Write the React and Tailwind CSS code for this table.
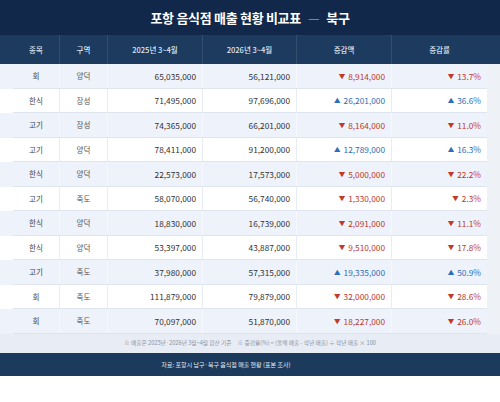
import React from "react";

const rows = [
  ["회", "양덕", "65,035,000", "56,121,000", "8,914,000", "13.7%", false],
  ["한식", "장성", "71,495,000", "97,696,000", "26,201,000", "36.6%", true],
  ["고기", "장성", "74,365,000", "66,201,000", "8,164,000", "11.0%", false],
  ["고기", "양덕", "78,411,000", "91,200,000", "12,789,000", "16.3%", true],
  ["한식", "양덕", "22,573,000", "17,573,000", "5,000,000", "22.2%", false],
  ["고기", "죽도", "58,070,000", "56,740,000", "1,330,000", "2.3%", false],
  ["한식", "양덕", "18,830,000", "16,739,000", "2,091,000", "11.1%", false],
  ["한식", "양덕", "53,397,000", "43,887,000", "9,510,000", "17.8%", false],
  ["고기", "죽도", "37,980,000", "57,315,000", "19,335,000", "50.9%", true],
  ["회", "죽도", "111,879,000", "79,879,000", "32,000,000", "28.6%", false],
  ["회", "죽도", "70,097,000", "51,870,000", "18,227,000", "26.0%", false],
];

function Delta({ up, value }) {
  return (
    <span className={`flex items-center gap-[3px] ${up ? "text-[#2f6db5]" : "text-[#c0392b]"}`}>
      <span className="text-[6.5px] leading-none">{up ? "▲" : "▼"}</span>
      <span>{value}</span>
    </span>
  );
}

export default function App() {
  return (
    <div
      className="w-[500px] bg-[#eef1f6] text-[#333]"
      style={{ fontFamily: '"Noto Sans CJK KR", "Noto Sans", sans-serif' }}
    >
      <div className="h-[35px] bg-[#12284a] flex items-center justify-center text-white text-[13px] font-bold tracking-[-0.3px]">
        <span>포항 음식점 매출 현황 비교표</span>
        <span className="mx-[7px] text-[#8a9bb5] font-normal">—</span>
        <span>북구</span>
      </div>
      <div className="h-[29px] bg-[#1d3a5f] grid grid-cols-[60px_48px_95px_94px_95px_95px_13px] text-[7.5px] text-[#dfe6f0] font-medium">
        <div className="flex items-center justify-center pl-[13px] border-r border-white/10">종목</div>
        <div className="flex items-center justify-center border-r border-white/10">구역</div>
        <div className="flex items-center justify-center border-r border-white/10">2025년 3~4월</div>
        <div className="flex items-center justify-center border-r border-white/10">2026년 3~4월</div>
        <div className="flex items-center justify-center border-r border-white/10">증감액</div>
        <div className="flex items-center justify-center">증감률</div>
        <div></div>
      </div>
      {rows.map((r, i) => {
        const light = i % 2 === 0;
        const bc = light ? "border-r border-[#f6f8fd]" : "border-r border-[#e8ecf3]";
        return (
          <div key={i} className={`w-[487px] h-[24.5px] flex ${light ? "bg-[#eef2fa]" : "bg-white"}`}>
            <div className="w-[13px]"></div>
            <div className="flex-1 grid grid-cols-[47px_48px_95px_94px_95px_95px] border-b border-[#dfe5ee] text-[8.3px]">
              <div className={`flex items-center justify-center text-[7.5px] text-[#444] ${bc}`}>{r[0]}</div>
              <div className={`flex items-center justify-center text-[7.5px] text-[#555] ${bc}`}>{r[1]}</div>
              <div className={`flex items-center justify-end pr-[6px] ${bc}`}>{r[2]}</div>
              <div className={`flex items-center justify-end pr-[6px] ${bc}`}>{r[3]}</div>
              <div className={`flex items-center justify-end pr-[6px] ${bc}`}>
                <Delta up={r[6]} value={r[4]} />
              </div>
              <div className="flex items-center justify-end pr-[6px]">
                <Delta up={r[6]} value={r[5]} />
              </div>
            </div>
          </div>
        );
      })}
      <div className="h-[19px] bg-[#e8ecf4] flex items-center justify-center text-[5.7px] text-[#8a93a3]">
        <span>※ 매출은 2025년·2026년 3월~4월 합산 기준</span>
        <span className="ml-[6px]">※ 증감률(%) = (올해 매출 - 작년 매출) ÷ 작년 매출 × 100</span>
      </div>
      <div className="h-[23px] bg-[#1b3a5c] flex items-center justify-center pr-[48px] text-[6px] text-[#e6ecf4]">
        자료: 포항시 남구·북구 음식점 매출 현황 (표본 조사)
      </div>
    </div>
  );
}
